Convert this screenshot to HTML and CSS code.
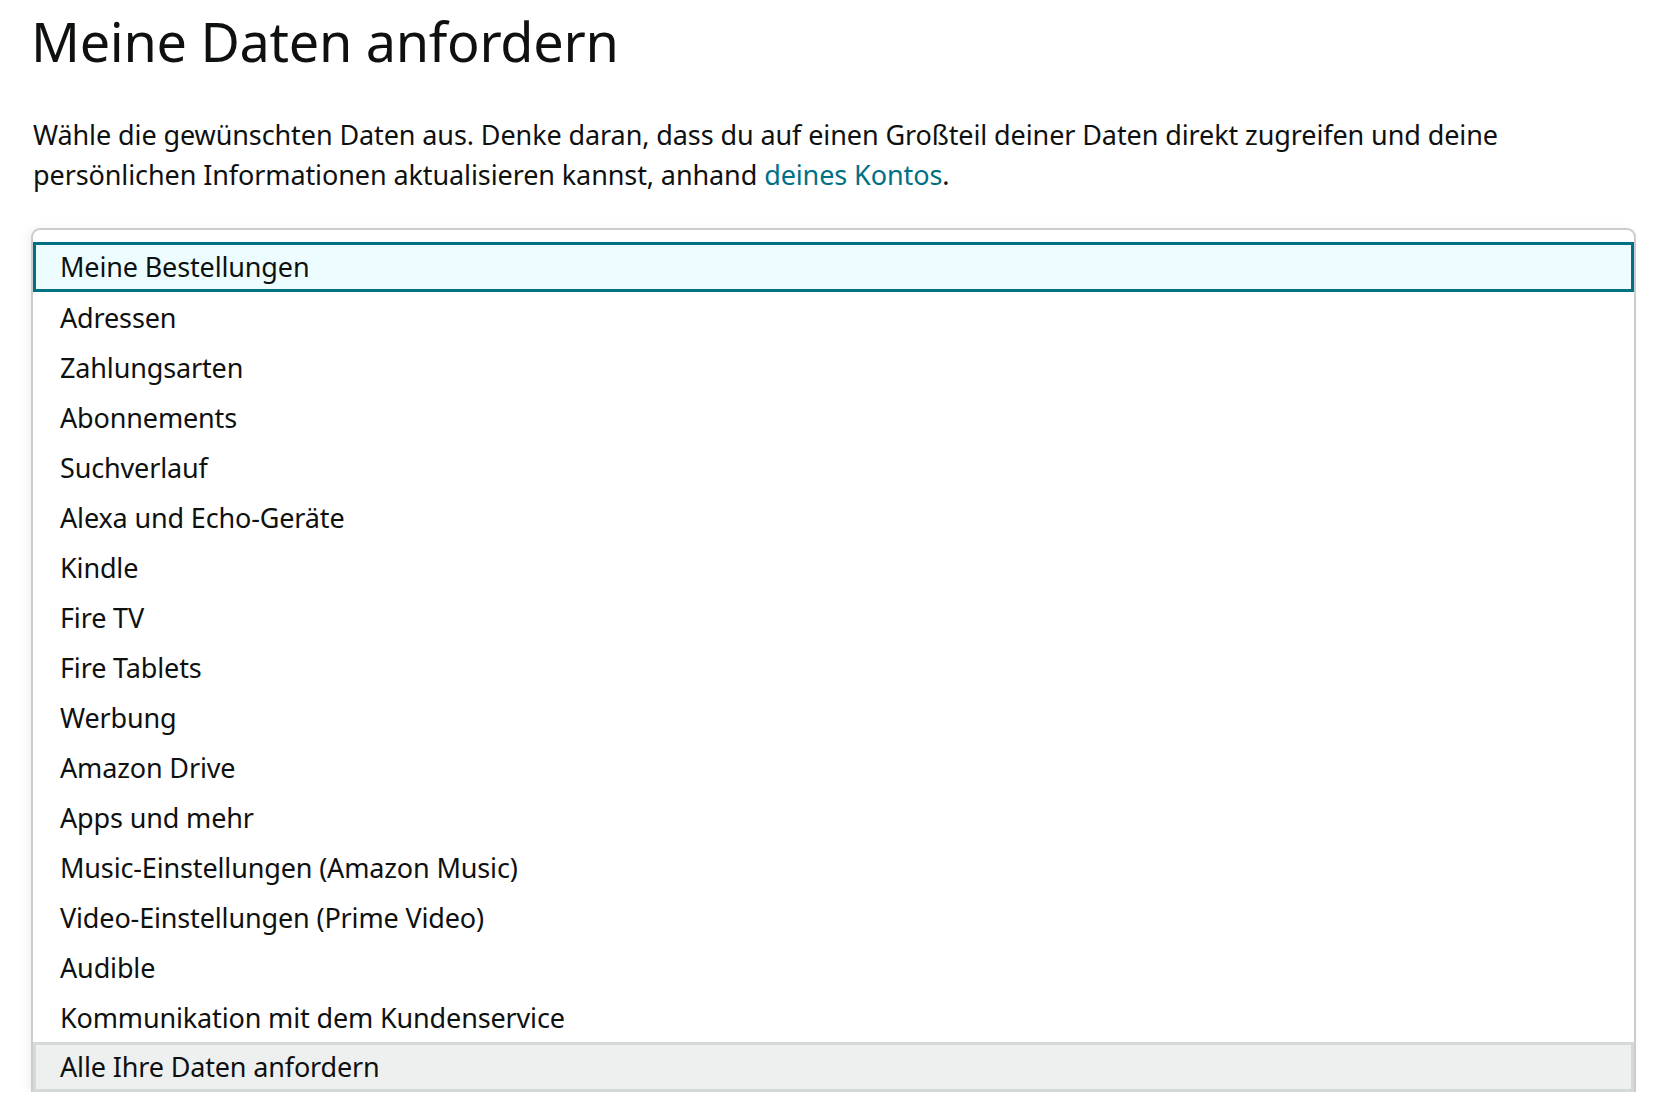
FILE: index.html
```html
<!DOCTYPE html>
<html lang="de">
<head>
    <meta charset="UTF-8">
    <meta name="viewport" content="width=device-width, initial-scale=1.0">
    <title>Meine Daten anfordern</title>
    <link rel="stylesheet" href="styles.css">
</head>
<body>

<div id="page">
    <h1 id="title">Meine Daten anfordern</h1>
    <p id="intro">Wähle die gewünschten Daten aus. Denke daran, dass du auf einen Großteil deiner Daten direkt zugreifen und deine persönlichen Informationen aktualisieren kannst, anhand <a href="#">deines Kontos</a>.</p>

    <ul id="data-list">
        <li class="option selected">Meine Bestellungen</li>
        <li class="option">Adressen</li>
        <li class="option">Zahlungsarten</li>
        <li class="option">Abonnements</li>
        <li class="option">Suchverlauf</li>
        <li class="option">Alexa und Echo-Geräte</li>
        <li class="option">Kindle</li>
        <li class="option">Fire TV</li>
        <li class="option">Fire Tablets</li>
        <li class="option">Werbung</li>
        <li class="option">Amazon Drive</li>
        <li class="option">Apps und mehr</li>
        <li class="option">Music-Einstellungen (Amazon Music)</li>
        <li class="option">Video-Einstellungen (Prime Video)</li>
        <li class="option">Audible</li>
        <li class="option">Kommunikation mit dem Kundenservice</li>
        <li class="option all">Alle Ihre Daten anfordern</li>
    </ul>
</div>

</body>
</html>
```

FILE: styles.css
```css
body {
    margin: 0;
    font-family: 'Noto Sans', 'Open Sans', sans-serif;
    background: #fff;
    color: #0f1111;
    overflow: hidden;
}
#page {
    padding: 0 19px 0 31px;
}
#title {
    margin: 0;
    padding-top: 5px;
    font-size: 54px;
    font-weight: 400;
    line-height: 72px;
    letter-spacing: -0.3px;
}
#intro {
    max-width: 1520px;
    margin: 38px 0 0 2px;
    font-size: 27px;
    line-height: 40px;
    letter-spacing: -0.1px;
}
#intro a {
    color: #007185;
    text-decoration: none;
}
#data-list {
    list-style: none;
    margin: 33px 0 0 0;
    padding: 12px 0 0 0;
    border: 2px solid #ccc;
    border-bottom: none;
    border-radius: 9px 9px 0 0;
    box-shadow: -4px 0 8px rgba(0, 0, 0, 0.05);
}
.option {
    height: 50px;
    line-height: 48px;
    padding-left: 25px;
    font-size: 27px;
    letter-spacing: -0.15px;
    border: 2px solid transparent;
    box-sizing: border-box;
}
.selected {
    background: #edfdff;
    border: 3px solid #007185;
    padding-left: 24px;
    line-height: 44px;
}
.all {
    background: #eef0ef;
    border: 3px solid #d5d9d9;
    padding-left: 24px;
    line-height: 44px;
}
```
